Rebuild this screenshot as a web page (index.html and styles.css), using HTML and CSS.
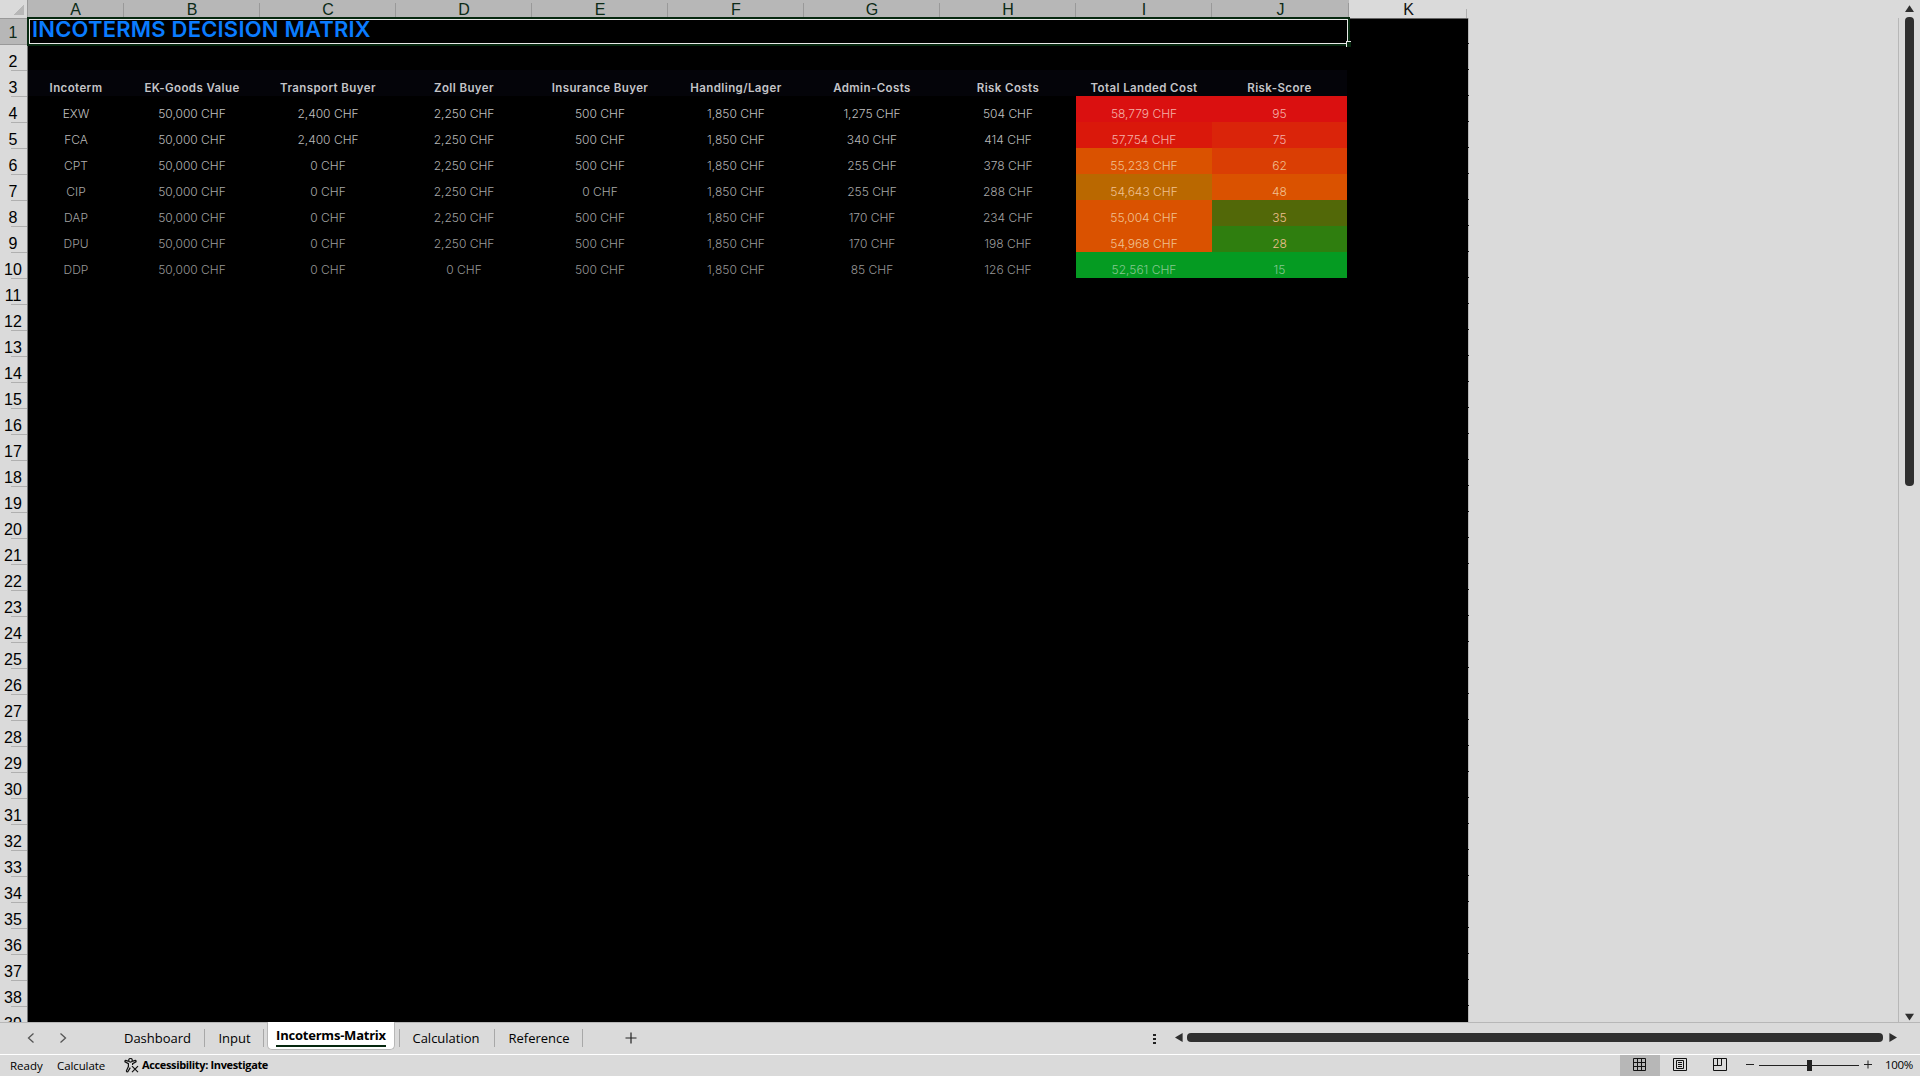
FILE: index.html
```html
<!DOCTYPE html>
<html lang="en">

<head>
    <meta charset="UTF-8">
    <meta name="viewport" content="width=device-width, initial-scale=1.0">
    <title>Incoterms Decision Matrix</title>
    <link rel="stylesheet" href="styles.css">
</head>

<body>
    <div class="workbook">
        <div class="main">
            <div class="sheet">
                <div class="col-heads">
                    <div class="corner"></div>
                    <div class="head-a">A</div>
                    <div>B</div>
                    <div>C</div>
                    <div>D</div>
                    <div>E</div>
                    <div>F</div>
                    <div>G</div>
                    <div>H</div>
                    <div>I</div>
                    <div class="head-j">J</div>
                    <div class="head-k">K</div>
                </div>
                <div class="sheet-body">
                    <div class="row-heads" id="rowHeads"></div>
                    <div class="cells">
                        <div class="title"><span>INCOTERMS DECISION MATRIX</span><i class="handle"></i></div>
                        <div class="matrix" id="matrix"></div>
                    </div>
                    <div class="grid-edge"></div>
                </div>
            </div>
            <div class="vscroll">
                <svg width="9" height="8" viewBox="0 0 9 8"><path d="M4.5 0.3 L9 7 H0 Z" /></svg>
                <div class="vthumb"></div>
                <svg class="down" width="9" height="8" viewBox="0 0 9 8"><path d="M4.5 7.5 L9 0.8 H0 Z" /></svg>
            </div>
        </div>

        <div class="tabs">
            <div class="arrows">
                <svg width="8" height="12" viewBox="0 0 8 12"><path d="M6.5 1.5 L1.5 6 L6.5 10.5" /></svg>
                <svg width="8" height="12" viewBox="0 0 8 12"><path d="M1.5 1.5 L6.5 6 L1.5 10.5" /></svg>
            </div>
            <div class="tab t1"><span>Dashboard</span></div>
            <div class="tab t2"><span>Input</span></div>
            <div class="tab active"><span>Incoterms-Matrix</span></div>
            <div class="tab t4"><span>Calculation</span></div>
            <div class="tab t5"><span>Reference</span></div>
            <svg class="add" width="12" height="12" viewBox="0 0 12 12"><path d="M6 0.5 V11.5 M0.5 6 H11.5" /></svg>
            <div class="hscroll">
                <div class="dots"><i></i><i></i><i></i></div>
                <svg width="8" height="9" viewBox="0 0 8 9"><path d="M0 4.5 L7.6 0 V9 Z" /></svg>
                <div class="hthumb"></div>
                <svg width="8" height="9" viewBox="0 0 8 9"><path d="M8 4.5 L0.4 0 V9 Z" /></svg>
            </div>
        </div>

        <div class="status">
            <span class="ready">Ready</span>
            <span class="calc">Calculate</span>
            <svg class="access" width="15" height="15" viewBox="0 0 15 15">
                <circle cx="6.5" cy="2.3" r="1.8" />
                <path d="M4.8 3.4 L1.8 2.4 Q0.6 2.6 1 3.8 L4.4 5.6 V8.5 L2.4 12.8 Q2.6 14.2 3.8 13.8 L6.3 9.6 M8.2 3.4 L11.2 2.4 Q12.4 2.6 12 3.8 L8.6 5.6 V7" />
                <path d="M8 8.2 L14 14.2 M14 8.2 L8 14.2" />
            </svg>
            <b class="investigate">Accessibility: Investigate</b>
            <div class="views">
                <div class="view on">
                    <svg width="14" height="14" viewBox="0 0 14 14"><path d="M0.5 0.5 H12.5 V12.5 H0.5 Z M4.5 0.5 V12.5 M8.5 0.5 V12.5 M0.5 4.5 H12.5 M0.5 8.5 H12.5" /></svg>
                </div>
                <div class="view">
                    <svg width="14" height="14" viewBox="0 0 14 14"><path d="M0.5 0.5 H13.5 V12.5 H0.5 Z M3.5 2.5 H10.5 V10.5 H3.5 Z M5 4.5 H9 M5 6.5 H9 M5 8.5 H9" /></svg>
                </div>
                <div class="view">
                    <svg width="14" height="14" viewBox="0 0 14 14"><path d="M0.5 0.5 H13.5 V12.5 H0.5 Z M0.5 7.5 H8.5 V0.5 M4.5 0.5 V7.5" /></svg>
                </div>
            </div>
            <svg class="zoom" width="127" height="13" viewBox="0 0 127 13">
                <path d="M1 5.5 H9 M14 6.5 H114 M119 5.5 H127 M123 1.5 V9.5" />
                <rect x="62" y="1" width="5" height="11" />
            </svg>
            <span class="percent">100%</span>
        </div>
    </div>
    <script>
        var heads = ['Incoterm', 'EK-Goods Value', 'Transport Buyer', 'Zoll Buyer', 'Insurance Buyer',
            'Handling/Lager', 'Admin-Costs', 'Risk Costs', 'Total Landed Cost', 'Risk-Score'];
        // last two values: fill of the total cell, fill of the score cell
        var rows = [
            ['EXW', '50,000', '2,400', '2,250', '500', '1,850', '1,275', '504', '58,779', '95', '#da1010', '#da1010'],
            ['FCA', '50,000', '2,400', '2,250', '500', '1,850', '340', '414', '57,754', '75', '#da180b', '#da240a'],
            ['CPT', '50,000', '0', '2,250', '500', '1,850', '255', '378', '55,233', '62', '#da5200', '#da3e04'],
            ['CIP', '50,000', '0', '2,250', '0', '1,850', '255', '288', '54,643', '48', '#ba6800', '#da5200'],
            ['DAP', '50,000', '0', '2,250', '500', '1,850', '170', '234', '55,004', '35', '#da5200', '#526808'],
            ['DPU', '50,000', '0', '2,250', '500', '1,850', '170', '198', '54,968', '28', '#da5200', '#2f7e0f'],
            ['DDP', '50,000', '0', '0', '500', '1,850', '85', '126', '52,561', '15', '#059b22', '#059b22']
        ];

        // row numbers
        var html = '';
        for (var i = 1; i <= 39; i++) {
            html += '<div class="' + (i == 1 ? 'sel' : '') + '"><span>' + i + '</span></div>';
        }
        document.getElementById('rowHeads').innerHTML = html;

        // matrix cells
        html = '';
        for (var i = 0; i < heads.length; i++) {
            html += '<div class="th">' + heads[i] + '</div>';
        }
        for (var i = 0; i < rows.length; i++) {
            for (var j = 0; j < 10; j++) {
                var text = j > 0 && j < 9 ? rows[i][j] + ' CHF' : rows[i][j];
                if (j > 7) {
                    html += '<div class="td fill r' + i + '" style="background-color: ' + rows[i][j + 2] + '">' + text + '</div>';
                } else {
                    html += '<div class="td r' + i + '">' + text + '</div>';
                }
            }
        }
        document.getElementById('matrix').innerHTML = html;
    </script>
</body>

</html>
```
FILE: styles.css
```css
* {
    margin: 0;
    padding: 0;
    box-sizing: border-box;
}

body {
    background-color: #dadada;
    overflow: hidden;
    font-family: "Open Sans", sans-serif;
    color: #000;
}

svg {
    display: block;
    flex: none;
}

.workbook {
    display: flex;
    flex-direction: column;
    width: 1920px;
    height: 1076px;
}

.main {
    display: flex;
    height: 1022px;
}

.sheet {
    width: 1899px;
    height: 1022px;
    overflow: hidden;
}

/* column letters */
.col-heads {
    display: flex;
    height: 18px;
    font: 16px/20px "Liberation Sans", sans-serif;
    color: #0b2a16;
    text-align: center;
}

.col-heads div {
    width: 136px;
    height: 18px;
    background: #b7b7b7 linear-gradient(#999, #999) no-repeat right bottom / 1px 15px;
}

.col-heads .corner {
    width: 28px;
    background: #dadada linear-gradient(135deg, transparent 50%, #b7b7b7 50%) no-repeat 14px 5px / 10px 10px;
    border-right: 1px solid #999;
}

.col-heads .head-a {
    width: 96px;
    padding-right: 1px;
}

.col-heads .head-j {
    width: 137px;
}

.col-heads .head-k {
    width: 118px;
    padding-left: 1px;
    color: #111;
    background: #dadada linear-gradient(#b0b0b0, #b0b0b0) no-repeat right bottom / 1px 9px;
}

.sheet-body {
    display: flex;
    height: 1004px;
    border-right: 1px solid #b7b7b7;
}

/* row numbers */
.row-heads {
    width: 28px;
    height: 1004px;
    overflow: hidden;
    border-right: 1px solid #777;
    font: 16px/36px "Liberation Sans", sans-serif;
    text-align: center;
}

.row-heads div {
    height: 26px;
    padding-right: 1px;
    background: linear-gradient(#b0b0b0, #b0b0b0) no-repeat right top / 16px 1px;
}

.row-heads .sel {
    background: #b7b7b7;
    color: #0b2a16;
    border-top: 1px solid #999;
    line-height: 27px;
}

.row-heads .sel + div {
    background: linear-gradient(#999, #999) no-repeat right top / 28px 1px;
}

.cells {
    width: 1440px;
    background-color: #000;
    border-top: 1px solid #666;
}

.grid-edge {
    width: 1px;
    background: repeating-linear-gradient(#b7b7b7 0 25px, #111 25px 26px);
}

.title {
    position: relative;
    width: 1323px;
    height: 29px;
    margin: -2px 0 0 -1px;
    border: 2px solid #06280f;
    box-shadow: inset 0 0 0 1px #e8e8e8;
    background-color: #000;
    font: 600 22px/20px Inter, sans-serif;
    letter-spacing: 0.2px;
    color: #0a7cff;
    padding-left: 3px;
    white-space: nowrap;
}

.handle {
    position: absolute;
    right: -3px;
    bottom: -3px;
    width: 5px;
    height: 6px;
    background-color: #06280f;
    border-top: 1px solid #e8e8e8;
    border-left: 1px solid #e8e8e8;
}

.matrix {
    display: grid;
    grid-template-columns: 96px repeat(8, 136px) 135px;
    grid-auto-rows: 26px;
    width: 1319px;
    margin-top: 24px;
    font: 12px/36px Inter, sans-serif;
    text-align: center;
    white-space: nowrap;
}

.th {
    background-color: #040409;
    color: #c4c4c8;
    font-size: 11.5px;
    font-weight: 600;
    letter-spacing: 0.4px;
}

.td {
    font-weight: 300;
}

.r0 { color: #c0c0c0; }
.r1 { color: #b8b8b8; }
.r2 { color: #b0b0b0; }
.r3 { color: #a8a8a8; }
.r4 { color: #a2a2a2; }
.r5 { color: #9c9c9c; }
.r6 { color: #969696; }

.fill { color: #f0c090; }
.fill.r0, .fill.r1 { color: #f4b0a8; }
.fill.r6 { color: #84c890; }

/* scrollbars */
.vscroll {
    display: flex;
    flex-direction: column;
    width: 21px;
    padding: 5px 0 1px 6px;
    fill: #2f2f2f;
}

.vthumb {
    width: 9px;
    height: 469px;
    margin-top: 4px;
    border-radius: 4px;
    background-color: #2f2f2f;
}

.down {
    margin-top: auto;
}

.tabs {
    display: flex;
    height: 33px;
    border-top: 1px solid #b7b7b7;
    border-bottom: 1px solid #fff;
    font-size: 13px;
    line-height: 31px;
}

.arrows {
    display: flex;
    gap: 24px;
    width: 106px;
    padding: 9px 0 0 27px;
    fill: none;
    stroke: #555;
    stroke-width: 1.3;
}

.tab {
    height: 31px;
    text-align: center;
    white-space: nowrap;
    background: linear-gradient(#a8a8a8, #a8a8a8) no-repeat right 6px / 1px 18px;
}

.t1 { width: 99px; padding-left: 4px; }
.t2 { width: 59px; }
.t5 { width: 88px; }

.t4 {
    width: 96px;
    padding-right: 2px;
    background: linear-gradient(#a8a8a8, #a8a8a8) no-repeat right 6px / 1px 18px,
        linear-gradient(#a8a8a8, #a8a8a8) no-repeat left 6px / 1px 18px;
}

.tab.active {
    width: 128px;
    height: 28px;
    margin: -1px 4px 0 3px;
    border: 1px solid #b7b7b7;
    border-top: 0;
    border-radius: 0 0 5px 5px;
    background: #fff;
    font-weight: bold;
    letter-spacing: -0.22px;
    line-height: 27px;
}

.active span {
    display: block;
    height: 25px;
    margin: 0 8px;
    border-bottom: 2px solid #06280f;
}

.add {
    margin: 9px 0 0 42px;
    stroke: #222;
    stroke-width: 1.2;
}

.hscroll {
    display: flex;
    align-items: flex-start;
    margin-left: auto;
    margin-right: 23px;
    padding-top: 10px;
    fill: #2f2f2f;
}

.dots {
    display: grid;
    gap: 2px;
    width: 3px;
    margin: 1px 19px 0 0;
}

.dots i {
    width: 3px;
    height: 2px;
    background-color: #222;
}

.hthumb {
    width: 696px;
    height: 9px;
    margin: 0 6px 0 4px;
    border-radius: 4px;
    background-color: #2f2f2f;
}

.status {
    display: flex;
    height: 21px;
    font-size: 11.5px;
    line-height: 22px;
    white-space: nowrap;
}

.ready {
    width: 47px;
    margin-left: 10px;
}

.calc {
    width: 67px;
    letter-spacing: -0.1px;
}

.access {
    margin-top: 3px;
    fill: none;
    stroke: #111;
    stroke-width: 1.2;
}

.investigate {
    margin-left: 3px;
    font-size: 11px;
    letter-spacing: -0.35px;
    line-height: 20px;
}

.views {
    display: flex;
    margin-left: auto;
}

.view {
    width: 40px;
    padding: 3px 0 0 13px;
    fill: none;
    stroke: #111;
}

.view.on {
    background-color: #b7b7b7;
}

.zoom {
    margin: 4px 0 0 5px;
    stroke: #222;
}

.zoom rect {
    fill: #222;
    stroke: none;
}

.percent {
    width: 48px;
    padding-left: 13px;
    line-height: 20px;
    letter-spacing: -0.3px;
}
```
